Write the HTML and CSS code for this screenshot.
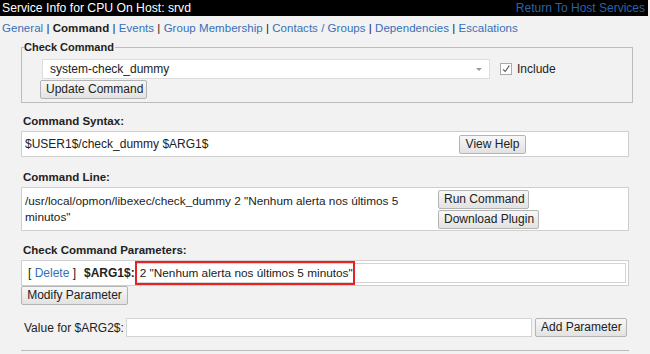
FILE: index.html
```html
<!DOCTYPE html>
<html>
<head>
<meta charset="utf-8">
<link rel="stylesheet" href="styles.css">
</head>
<body>
<div class="topbar">
  <span class="title">Service Info for CPU On Host: srvd</span>
  <a class="return" href="#">Return To Host Services</a>
</div>
<div class="tabs">
  <a href="#">General</a> | <b>Command</b> | <a href="#">Events</a> | <a href="#">Group Membership</a> | <a href="#">Contacts / Groups</a> | <a href="#">Dependencies</a> | <a href="#">Escalations</a>
</div>
<div class="main">
  <fieldset class="cc">
    <legend>Check Command</legend>
    <div class="cc-body">
      <div class="cc-row">
        <div class="select-wrap">
          <select class="sel"><option>system-check_dummy</option></select>
        </div>
        <label class="include"><span class="check"><svg width="12" height="12" viewBox="0 0 12 12"><path d="M2.5 6.5 L5 9 L10 2" fill="none" stroke="#555" stroke-width="1.3"/></svg></span>Include</label>
      </div>
      <button class="btn upd">Update Command</button>
    </div>
  </fieldset>

  <div class="label l-syntax">Command Syntax:</div>
  <div class="box syntax">
    <div class="cell-text">$USER1$/check_dummy $ARG1$</div>
    <div class="cell-btn"><button class="btn">View Help</button></div>
  </div>

  <div class="label l-line">Command Line:</div>
  <div class="box cmdline">
    <div class="cell-text">/usr/local/opmon/libexec/check_dummy 2 "Nenhum alerta nos últimos 5 minutos"</div>
    <div class="cell-btns">
      <button class="btn">Run Command</button>
      <button class="btn">Download Plugin</button>
    </div>
  </div>

  <div class="label l-params">Check Command Parameters:</div>
  <div class="box params">
    <span class="del">[ <a href="#">Delete</a> ]</span>
    <b class="arg">$ARG1$:</b>
    <div class="arg-input-wrap">
      <input class="arg-input" type="text" value='2 "Nenhum alerta nos últimos 5 minutos"'>
      <span class="highlight"></span>
    </div>
  </div>
  <button class="btn mod">Modify Parameter</button>

  <div class="value-row">
    <span class="vlabel">Value for $ARG2$:</span>
    <input class="vinput" type="text">
    <button class="btn add">Add Parameter</button>
  </div>
  <div class="rule"></div>
</div>
</body>
</html>
```
FILE: styles.css
```css
* { box-sizing: border-box; }
html, body { margin: 0; padding: 0; }
body {
  background: #f2f2f2;
  font-family: "Liberation Sans", Arial, sans-serif;
  font-size: 12px;
  color: #222;
  width: 650px;
  height: 354px;
  overflow: hidden;
}
a { color: #3670b8; text-decoration: none; }

.topbar {
  background: #000;
  height: 16px;
  margin-right: 2px;
  display: flex;
  justify-content: space-between;
  align-items: center;
  padding: 0 3px 0 2px;
}
.title { color: #fff; font-size: 12.2px; }
.return { color: #2a63a8; font-size: 12px; }

.tabs {
  margin-top: 5px;
  padding-left: 2px;
  height: 14px;
  line-height: 14px;
  font-size: 11.5px;
  letter-spacing: 0.04px;
  color: #222;
}

.main { padding-left: 21px; width: 629px; }

.cc {
  margin: 6px 0 0 0;
  width: 612px;
  border: 1px solid #bcbcbc;
  padding: 5px 10px 3px 2px;
}
.cc legend {
  font-weight: bold;
  font-size: 11px;
  padding: 0 1px 0 0;
  line-height: 13px;
}
.cc-body { padding-left: 16px; }
.cc-row { display: flex; align-items: center; padding-left: 2px; }
.select-wrap { position: relative; width: 448px; height: 20px; }
.select-wrap::after {
  content: "";
  position: absolute;
  right: 8px;
  top: 9px;
  border-left: 3px solid transparent;
  border-right: 3px solid transparent;
  border-top: 3px solid #999;
}
.sel {
  appearance: none;
  -webkit-appearance: none;
  width: 100%;
  height: 20px;
  border: 1px solid #ddd;
  background: #fff;
  font-family: "Liberation Sans", Arial, sans-serif;
  font-size: 12px;
  color: #222;
  padding: 0 0 0 7px;
  border-radius: 0;
}
.include { display: flex; align-items: center; margin-left: 10px; font-size: 12px; }
.check {
  width: 12px; height: 12px;
  border: 1px solid #aaa;
  background: #fff;
  margin-right: 5px;
  display: flex; align-items: center; justify-content: center;
}
.check svg { display: block; }

.btn {
  font-family: "Liberation Sans", Arial, sans-serif;
  font-size: 12px;
  color: #222;
  height: 19px;
  padding: 0 5px;
  border: 1px solid #b4b4b4;
  border-radius: 2px;
  background: linear-gradient(#f7f7f7, #e2e2e2);
  line-height: 17px;
  white-space: nowrap;
}
.upd { margin-top: 1px; width: 107px; display: block; }

.label { font-weight: bold; font-size: 11.5px; line-height: 14px; padding-left: 2px; }
.l-syntax { margin-top: 11px; }
.l-line { margin-top: 13px; }
.l-params { margin-top: 12px; }

.box {
  background: #fff;
  border: 1px solid #cfcfcf;
  width: 608px;
  margin-top: 3px;
}
.syntax { height: 26px; display: flex; align-items: center; }
.syntax .cell-text { width: 437px; padding-left: 3px; }
.syntax .btn { width: 67px; }

.cmdline { height: 44px; display: flex; align-items: center; }
.cmdline .cell-text { width: 416px; padding-left: 3px; line-height: 16px; font-size: 11.8px; }
.cell-btns { display: flex; flex-direction: column; align-items: flex-start; gap: 1px; }
.cell-btns .btn:first-child { width: 91px; }
.cell-btns .btn:last-child { width: 101px; }

.params { height: 26px; display: flex; align-items: center; }
.del { margin-left: 6px; }
.arg { margin-left: 8px; font-size: 12px; }
.arg-input-wrap { position: relative; margin-left: 1px; }
.arg-input {
  display: block;
  width: 490px;
  height: 20px;
  border: 1px solid #d4d4d4;
  padding: 0 0 0 3px;
  font-family: "Liberation Sans", Arial, sans-serif;
  font-size: 11.8px;
  color: #222;
}
.highlight {
  position: absolute;
  left: -1px; top: -2px;
  width: 220px; height: 24px;
  border: 2px solid #e52323;
}
.mod { display: block; width: 107px; margin-top: 0; }

.value-row { display: flex; align-items: center; margin-top: 13px; padding-left: 3px; }
.vlabel { width: 102px; }
.vinput {
  width: 406px; height: 19px;
  border: 1px solid #d4d4d4;
  background: #fff;
}
.add { margin-left: 3px; width: 92px; height: 19px; }

.rule { margin-top: 13px; width: 608px; border-top: 1px solid #bbb; }
```
